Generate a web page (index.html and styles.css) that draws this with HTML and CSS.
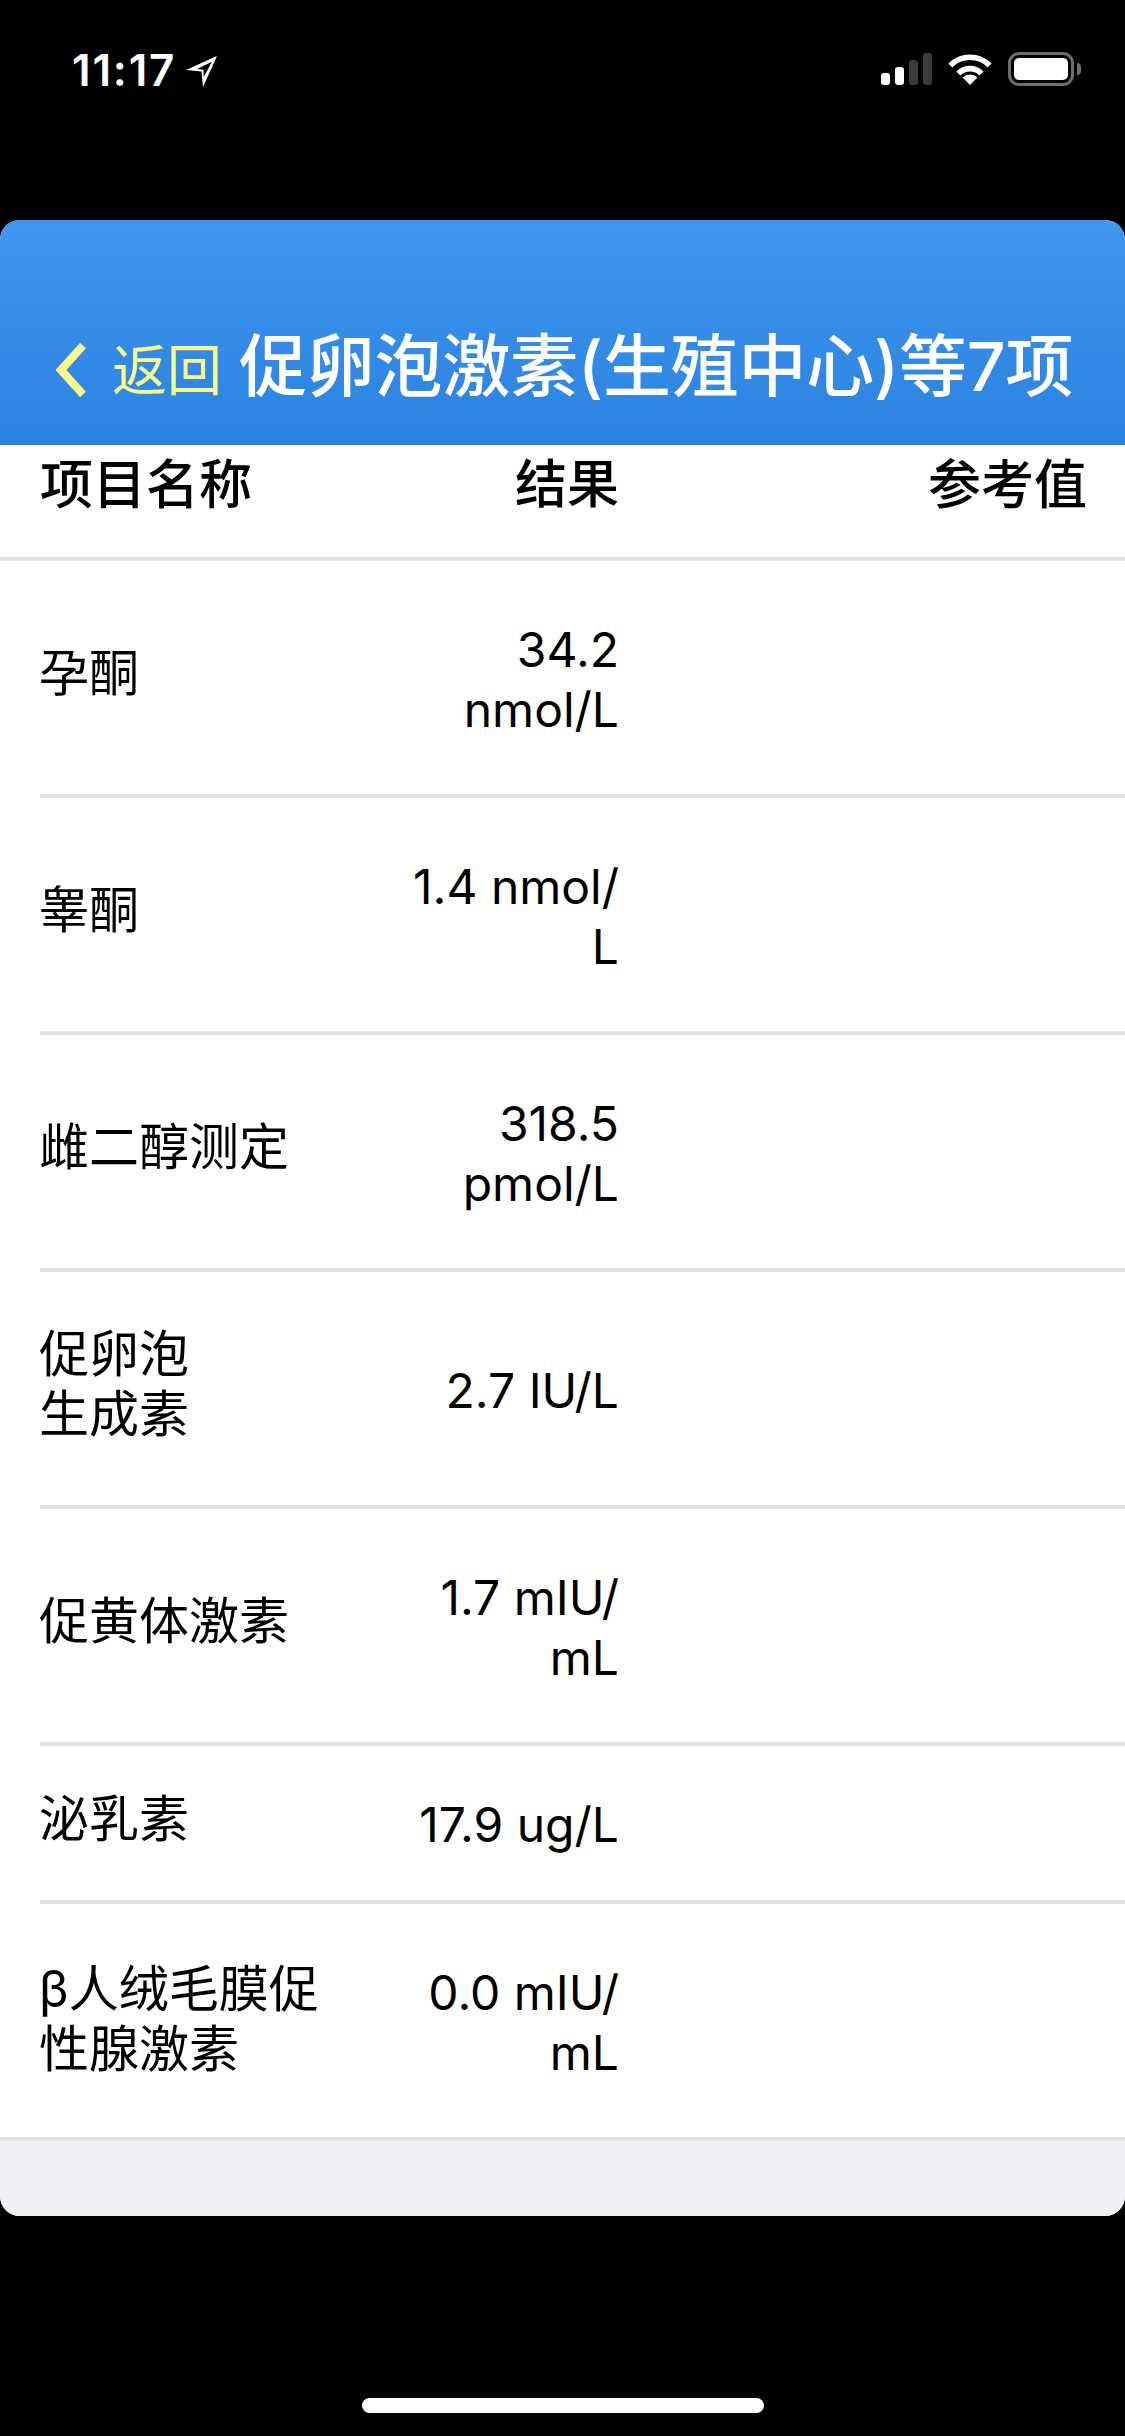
FILE: index.html
```html
<!DOCTYPE html>
<html lang="zh-CN">
<head>
<meta charset="utf-8">
<title>促卵泡激素(生殖中心)等7项</title>
<link rel="stylesheet" href="styles.css">
</head>
<body>
<div class="status">
  <div class="status-left">
    <span class="time">11:17</span>
    <svg class="loc" width="31" height="31" viewBox="0 0 31 31"><path fill="#fff" fill-rule="evenodd" d="M31 0L0 14L15.5 15.5L17 31ZM26 5.7L11 13L17.5 13.8L17.7 21Z"/></svg>
  </div>
  <div class="status-right">
    <svg class="signal" width="51" height="32" viewBox="0 0 51 32">
      <rect x="0" y="20" width="9" height="12" rx="3" fill="#fff"/>
      <rect x="14" y="14" width="9" height="18" rx="3" fill="#fff"/>
      <rect x="28" y="7" width="9" height="25" rx="3" fill="#3a3a3a"/>
      <rect x="42" y="0" width="9" height="32" rx="3" fill="#3a3a3a"/>
    </svg>
    <svg class="wifi" width="46" height="32" viewBox="0 0 46 32">
      <path d="M23 32L15.6 24.6A10.5 10.5 0 0 1 30.4 24.6Z" fill="#fff"/>
      <path d="M11.4 20.4A16.4 16.4 0 0 1 34.6 20.4" fill="none" stroke="#fff" stroke-width="5.6"/>
      <path d="M3.4 12.4A27.7 27.7 0 0 1 42.6 12.4" fill="none" stroke="#fff" stroke-width="5.6"/>
    </svg>
    <div class="battery"><div class="battery-body"><div class="battery-fill"></div></div><div class="battery-cap"></div></div>
  </div>
</div>

<main class="card">
  <header class="nav">
    <div class="back">
      <svg class="chevron" width="30" height="54" viewBox="0 0 30 54"><path d="M27 2.5L5 27L27 51.5" fill="none" stroke="#f9f98c" stroke-width="8"/></svg>
      <span class="back-label">返回</span>
    </div>
    <h1 class="title">促卵泡激素(生殖中心)等7项</h1>
  </header>

  <div class="row row-head">
    <div class="name">项目名称</div>
    <div class="value">结果</div>
    <div class="ref">参考值</div>
  </div>

  <div class="row">
    <div class="name">孕酮</div>
    <div class="value">34.2 nmol/L</div>
    <div class="ref"></div>
  </div>
  <div class="row">
    <div class="name">睾酮</div>
    <div class="value">1.4 nmol/<wbr>L</div>
    <div class="ref"></div>
  </div>
  <div class="row">
    <div class="name">雌二醇测定</div>
    <div class="value">318.5 pmol/L</div>
    <div class="ref"></div>
  </div>
  <div class="row">
    <div class="name">促卵泡<br>生成素</div>
    <div class="value">2.7 IU/L</div>
    <div class="ref"></div>
  </div>
  <div class="row">
    <div class="name">促黄体激素</div>
    <div class="value">1.7 mIU/<wbr>mL</div>
    <div class="ref"></div>
  </div>
  <div class="row row-short">
    <div class="name">泌乳素</div>
    <div class="value">17.9 ug/L</div>
    <div class="ref"></div>
  </div>
  <div class="row row-last">
    <div class="name">β人绒毛膜促性腺激素</div>
    <div class="value">0.0 mIU/<wbr>mL</div>
    <div class="ref"></div>
  </div>
  <div class="footer-strip"></div>
</main>

<div class="home"><div class="home-bar"></div></div>
</body>
</html>
```

FILE: styles.css
```css
* { box-sizing: border-box; }
html, body { margin: 0; padding: 0; }
body {
  width: 1125px;
  height: 2436px;
  background: #000;
  display: flex;
  flex-direction: column;
  font-family: "Inter", "Noto Sans CJK SC", sans-serif;
  overflow: hidden;
}

.status {
  height: 220px;
  flex: none;
  display: flex;
  justify-content: space-between;
  align-items: flex-start;
  padding: 52px 44px 0 72px;
  color: #fff;
}
.status-left { display: flex; align-items: flex-start; gap: 11px; }
.time {
  width: 103px;
  font-size: 44px;
  font-weight: 600;
  line-height: 36px;
  letter-spacing: 1.8px;
}
.loc { margin-top: 4px; }
.status-right { display: flex; align-items: flex-start; }
.signal { margin-top: 1px; margin-right: 15px; }
.wifi { margin-top: 1px; margin-right: 15px; }
.battery { display: flex; align-items: center; }
.battery-body {
  width: 66px;
  height: 34px;
  border: 3px solid #6e6e6e;
  border-radius: 11px;
  padding: 3px;
}
.battery-fill { width: 100%; height: 100%; background: #fff; border-radius: 5px; }
.battery-cap {
  width: 4px;
  height: 12px;
  margin-left: 3px;
  background: #6e6e6e;
  border-radius: 0 6px 6px 0;
}

.card {
  flex: none;
  height: 1996px;
  background: #fff;
  border-radius: 20px;
  overflow: hidden;
  display: flex;
  flex-direction: column;
}

.nav {
  height: 225px;
  flex: none;
  background: linear-gradient(180deg, #3f96ef 0%, #2a83e0 100%);
  display: flex;
  align-items: flex-end;
  padding: 0 0 48px 56px;
}
.back { display: flex; align-items: center; color: #f9f98c; margin-right: 17px; }
.chevron { flex: none; margin-right: 26px; }
.back-label { font-size: 55px; line-height: 54px; }
.title {
  margin: 0;
  color: #fff;
  font-size: 68px;
  font-weight: 500;
  line-height: 62px;
  letter-spacing: -0.2px;
  white-space: nowrap;
}

.row {
  display: grid;
  grid-template-columns: 363px 216px 1fr;
  align-items: center;
  min-height: 237px;
  margin-left: 40px;
  padding: 4px 38px 0 0;
  border-bottom: 4px solid #e2e2e2;
  font-size: 48px;
  line-height: 60px;
  color: #000;
}
.name { font-size: 50px; padding-right: 60px; margin-bottom: 13px; margin-left: -1px; }
.value { text-align: right; }
.ref { text-align: right; }

.row-head {
  min-height: 116px;
  margin-left: 0;
  padding: 10px 38px 42px 40px;
  font-size: 53px;
  font-weight: 500;
}
.row-head .name { font-size: 53px; margin-bottom: 0; margin-left: 0; padding-right: 0; white-space: nowrap; }
.row-head .value { font-size: 52px; }
.row-head .ref { white-space: nowrap; }

.row-short { min-height: 158px; }
.row-last { margin-left: 0; padding-left: 40px; }
.row-last .name { margin-bottom: 8px; }

.footer-strip { flex: 1; background: #efeff4; }

.home {
  flex: 1;
  display: flex;
  justify-content: center;
  align-items: flex-end;
  padding-bottom: 23px;
}
.home-bar { width: 402px; height: 15px; border-radius: 8px; background: #fff; }
```
